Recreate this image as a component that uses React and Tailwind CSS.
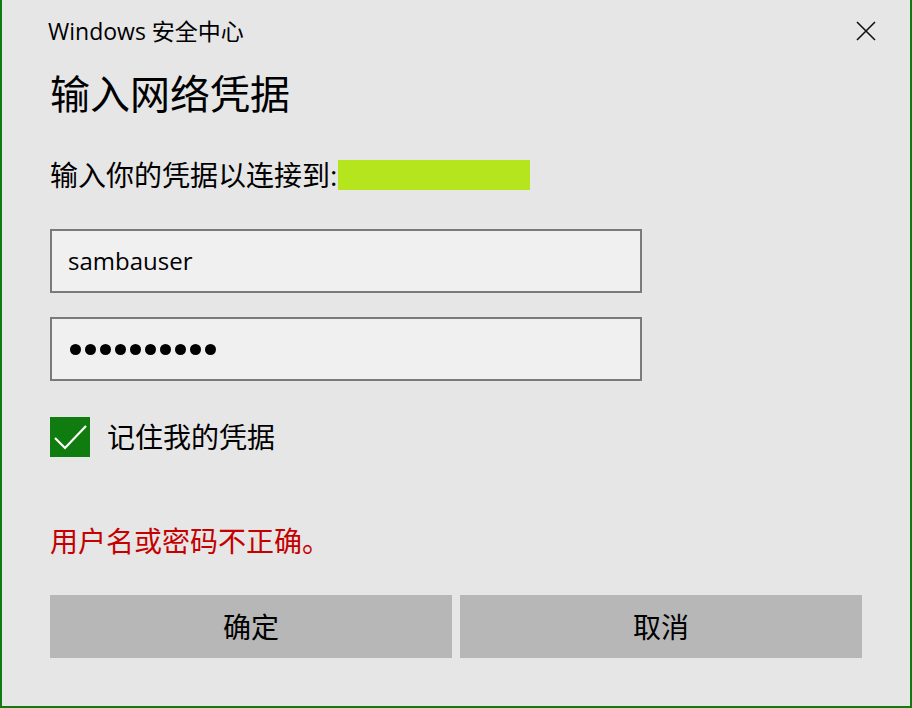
import React from "react";

const font = "font-['Open_Sans','Noto_Sans_CJK_SC',sans-serif]";

const App = () => {
  return (
    <div
      className={`w-[912px] h-[708px] bg-[#e6e6e6] border-l-2 border-r-2 border-b-2 border-[#107c10] flex flex-col text-black ${font}`}
    >
      {/* 标题栏 */}
      <div className="h-[62px] flex items-center justify-between pl-[46px] pr-[34px]">
        <span className="text-[23px] leading-[30px]">Windows 安全中心</span>
        <svg width="20" height="20" viewBox="0 0 20 20">
          <path d="M1 1L19 19M19 1L1 19" stroke="#111" strokeWidth="1.6" />
        </svg>
      </div>

      <div className="pl-[48px] flex flex-col">
        <h1 className="mt-[8px] text-[40px] leading-[48px] font-normal">
          输入网络凭据
        </h1>

        <div className="mt-[39px] h-[36px] flex items-center text-[28px] leading-[36px]">
          <span>输入你的凭据以连接到:</span>
          <span className="ml-[1px] inline-block w-[192px] h-[30px] bg-[#b5e61d]" />
        </div>

        {/* 用户名 */}
        <div className="mt-[36px] w-[592px] h-[64px] bg-[#f0f0f0] border-2 border-[#7a7a7a] flex items-center pl-[16px] text-[24px]">
          sambauser
        </div>

        {/* 密码 */}
        <div className="mt-[24px] w-[592px] h-[64px] bg-[#f0f0f0] border-2 border-[#7a7a7a] flex items-center pl-[18px] gap-[4px]">
          {Array.from({ length: 10 }).map((_, i) => (
            <span key={i} className="w-[11px] h-[11px] rounded-full bg-black" />
          ))}
        </div>

        {/* 记住凭据 */}
        <div className="mt-[36px] flex items-center">
          <div className="w-[40px] h-[40px] bg-[#107c10] flex items-center justify-center">
            <svg width="40" height="40" viewBox="0 0 40 40">
              <path d="M5 21L15 31L36 9" fill="none" stroke="#fff" strokeWidth="2.2" />
            </svg>
          </div>
          <span className="ml-[17px] text-[28px] leading-[36px]">记住我的凭据</span>
        </div>

        <div className="mt-[66px] text-[28px] leading-[36px] text-[#c50000]">
          用户名或密码不正确。
        </div>

        <div className="mt-[36px] flex gap-[8px]">
          <button className="w-[402px] h-[63px] bg-[#b7b7b7] text-[28px]">确定</button>
          <button className="w-[402px] h-[63px] bg-[#b7b7b7] text-[28px]">取消</button>
        </div>
      </div>
    </div>
  );
};

export default App;
